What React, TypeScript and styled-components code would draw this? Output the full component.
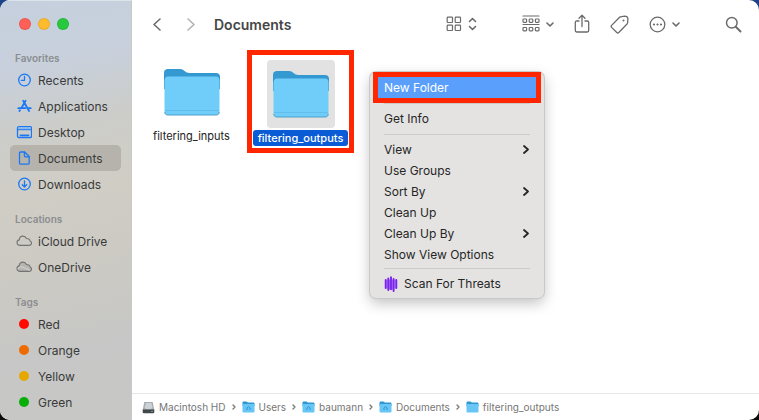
import React from "react";
import styled, { createGlobalStyle } from "styled-components";

const GlobalStyle = createGlobalStyle`
  *, *::before, *::after { box-sizing: border-box; }
  body {
    margin: 0;
    background: linear-gradient(180deg, #1f4387 0%, #23375c 45%, #0b0b0a 90%);
    font-family: Inter, "Liberation Sans", sans-serif;
    color: #1f1f1f;
  }
  button { font: inherit; color: inherit; background: none; border: 0; padding: 0; }
  ul, ol { list-style: none; margin: 0; padding: 0; }
  svg { display: block; flex: none; }
`;

const FinderWindow = styled.div`
  position: relative;
  display: flex;
  min-height: 100vh;
  border-radius: 10px;
  overflow: hidden;
  background: #ffffff;
`;

const Sidebar = styled.nav`
  flex: none;
  width: 132px;
  padding: 0 10px 4px;
  border-top: 1px solid #dde3ea;
  border-right: 1px solid #c9c9c5;
  background: linear-gradient(168deg, #c5d0de 0%, #c8d0dc 16%, #cccdca 30%, #d0cdc5 46%, #cbc9c3 66%, #c6c7c6 82%, #c7c7c5 100%);
`;

const WindowControls = styled.div`
  display: flex;
  gap: 7px;
  height: 49px;
  padding: 17px 0 0 9px;
`;

const Light = styled.button<{ $color: string }>`
  width: 12px;
  height: 12px;
  border-radius: 50%;
  background: ${(p) => p.$color};
  box-shadow: inset 0 0 0 1px rgba(0, 0, 0, 0.08);
`;

const Section = styled.section`
  & + & { margin-top: 14px; }
`;

const SectionTitle = styled.h2`
  margin: 0;
  padding-left: 5px;
  font-size: 10px;
  line-height: 17px;
  font-weight: 600;
  color: #8b8e90;
`;

const SideItem = styled.button<{ $active?: boolean }>`
  display: flex;
  align-items: center;
  gap: 6px;
  width: 100%;
  height: 26px;
  padding-left: 6px;
  border-radius: 5px;
  font-size: 12px;
  text-align: left;
  color: #3a3a3a;
  background: ${(p) => (p.$active ? "#b5b3ac" : "transparent")};
`;

const TagDot = styled.span<{ $color: string }>`
  width: 10px;
  height: 10px;
  margin: 0 3px;
  border-radius: 50%;
  background: ${(p) => p.$color};
`;

const Main = styled.main`
  flex: 1;
  min-width: 0;
  display: flex;
  flex-direction: column;
`;

const Toolbar = styled.header`
  display: flex;
  align-items: center;
  justify-content: space-between;
  height: 48px;
  padding: 0 17px 0 21px;
  color: #6b6b6b;
`;

const ToolGroup = styled.div<{ $gap: number }>`
  display: flex;
  align-items: center;
  gap: ${(p) => p.$gap}px;
`;

const ToolButton = styled.button`
  display: flex;
  align-items: center;
  gap: 6px;
  &:disabled { color: #b3b3b3; }
`;

const Title = styled.h1`
  margin: 0;
  font-size: 14px;
  font-weight: 600;
  color: #454545;
`;

const Files = styled.div`
  flex: 1;
  display: flex;
  align-items: flex-start;
  gap: 2px;
  padding: 2px 6px 0;
`;

const FileItem = styled.button<{ $selected?: boolean }>`
  position: relative;
  display: flex;
  flex-direction: column;
  align-items: center;
  gap: 2px;
  width: 107px;
  padding-top: ${(p) => (p.$selected ? 10 : 8)}px;
`;

const FileTile = styled.span<{ $selected?: boolean }>`
  display: grid;
  place-items: center;
  width: 68px;
  height: 68px;
  border-radius: 4px;
  background: ${(p) => (p.$selected ? "#e2e2e2" : "transparent")};
`;

const FileName = styled.span<{ $selected?: boolean }>`
  padding: 0 5px;
  border-radius: 3px;
  font-size: 11px;
  line-height: 16px;
  font-weight: ${(p) => (p.$selected ? 500 : 400)};
  color: ${(p) => (p.$selected ? "#ffffff" : "#222222")};
  background: ${(p) => (p.$selected ? "#0a5bd6" : "transparent")};
`;

const Callout = styled.span`
  position: absolute;
  inset: 0 0 -7px 0;
  border: 5px solid #ff2600;
  pointer-events: none;
`;

const PathBar = styled.footer`
  height: 27px;
  border-top: 1px solid #e6e6e6;
`;

const PathList = styled.ol`
  display: flex;
  align-items: center;
  height: 26px;
  padding-left: 10px;
  gap: 6px;
`;

const PathItem = styled.li`
  display: flex;
  align-items: center;
  gap: 6px;
  color: #767676;
`;

const PathButton = styled.button`
  display: flex;
  align-items: center;
  gap: 4px;
  font-size: 10px;
  white-space: nowrap;
`;

const Menu = styled.div`
  position: absolute;
  left: 370px;
  top: 72px;
  width: 174px;
  padding: 5px 0 4px;
  border-radius: 6px;
  background: #e4e3e2;
  box-shadow: 0 0 0 1px #c9c9c9, 0 5px 14px rgba(0, 0, 0, 0.25);
`;

const MenuItem = styled.button<{ $highlight?: boolean }>`
  position: relative;
  display: flex;
  align-items: center;
  gap: 6px;
  width: calc(100% - 10px);
  height: 21px;
  margin: 0 5px;
  padding: 0 10px 0 9px;
  font-size: 12px;
  text-align: left;
  color: ${(p) => (p.$highlight ? "#ffffff" : "#262626")};
  background: ${(p) => (p.$highlight ? "#5a9ffb" : "transparent")};
`;

const MenuLabel = styled.span`
  flex: 1;
`;

const MenuCallout = styled(Callout)`
  inset: -5px -2px;
`;

const Separator = styled.hr`
  height: 1px;
  margin: 5px 14px 4px;
  border: 0;
  background: #cccbca;
  &:last-of-type { margin-top: 3px; }
`;

const stroke = { fill: "none", stroke: "currentColor", strokeLinecap: "round", strokeLinejoin: "round" } as const;

type ChevronProps = { dir: "left" | "right" | "down"; w: number; h: number; weight?: number };

const Chevron = ({ dir, w, h, weight = 1.6 }: ChevronProps) => {
  const points = {
    left: `${w - 1},1 1,${h / 2} ${w - 1},${h - 1}`,
    right: `1,1 ${w - 1},${h / 2} 1,${h - 1}`,
    down: `1,1 ${w / 2},${h - 1} ${w - 1},1`,
  }[dir];
  return (
    <svg width={w} height={h} {...stroke} strokeWidth={weight} aria-hidden="true">
      <polyline points={points} />
    </svg>
  );
};

const cloud = "M4.4 12.4C2.3 12.4 1 11.2 1 9.6c0-1.4 1-2.5 2.3-2.7C3.2 4.7 4.8 3.1 6.9 3.1c1.6 0 2.9.9 3.5 2.4 2 0 3.5 1 3.6 2.5 1 .3 1.5 1.1 1.5 2 0 1.500-1.100 2.400-2.700 2.400Z";

const SideIcon = ({ name }: { name: string }) => {
  const isCloud = name === "cloud" || name === "onedrive";
  return (
    <svg width="16" height="16" viewBox="0 0 16 16" {...stroke} stroke={isCloud ? "#737373" : "#1a78f5"} strokeWidth={isCloud ? 1.1 : 1.3} aria-hidden="true">
      {name === "recents" && <><circle cx="8.5" cy="8" r="5.8" /><path d="M8.5 4.3v4H5.3" /></>}
      {name === "apps" && (
        <path strokeWidth="1.8" d="M7.2 2.8l5.900 10.200M9.600 2.800 5.300 10.200M3.900 12.300l-.5.800M2.300 10.200h7M12.600 10.200h2.100" />
      )}
      {name === "desktop" && (
        <>
          <rect x="1.5" y="2.7" width="14" height="10.8" rx="1.3" />
          <path fill="#8ab9ed" stroke="none" d="M2.200 3.300h12.600v2.200H2.200z" />
          <path d="M1.800 5.700h13.400" strokeWidth="1" />
          <path d="M4.500 11.300h8" strokeWidth="1.8" />
        </>
      )}
      {name === "documents" && (
        <>
          <path d="M4.600 2h4l4.600 4.500V13c0 .7-.4 1.100-1.100 1.100H4.600c-.7 0-1.100-.4-1.100-1.100V3.100C3.500 2.400 3.900 2 4.600 2Z" />
          <path d="M8.400 2.200v3.500c0 .7.4 1.100 1 1.100h3.600" />
        </>
      )}
      {name === "downloads" && <><circle cx="8.5" cy="8" r="5.8" /><path d="M8.500 4.900v6M6.300 8.800l2.200 2.200 2.200-2.200" /></>}
      {name === "cloud" && <path d={cloud} />}
      {name === "onedrive" && <><path d={cloud} fill="#b5b5b2" /><path d="M2 9.500c1.800-2 4-2 6.200-.8L13.500 11" stroke="#cfcfcb" /></>}
    </svg>
  );
};

const Folder = () => (
  <svg width="56" height="48" viewBox="0 0 56 48" aria-hidden="true">
    <path d="M0 5c0-3 1.500-4 4-4h12c2 0 3.300.8 4.600 2s2.800 2 5 2H52c2.700 0 4 1.300 4 4v12H0Z" fill="#3599d1" />
    <path d="M0 9.500h55.500v3H0Z" fill="#178bc9" />
    <path d="M.5 12c0-2.300 1.200-3.500 3.500-3.500h48c2.300 0 3.500 1.200 3.500 3.500v31.500c0 2.500-1.200 3.500-3.500 3.500H4c-2.300 0-3.500-1-3.500-3.500Z" fill="#70cdfa" />
    <path d="M1 42.500h54" stroke="#62bdea" />
    <path d="M.8 44c.2 2.200 1.300 3 3.200 3h48c2 0 3-.8 3.200-3" fill="none" stroke="#4c9fcb" />
  </svg>
);

const SmallFolder = ({ mark }: { mark?: boolean }) => (
  <svg width="13" height="12" viewBox="0 0 13 12" aria-hidden="true">
    <path d="M.5 1.500Q.5.500 1.500.500h3l1.300 1h5.700q1 0 1 1V5H.5Z" fill="#2e96d1" />
    <path d="M.5 3.800q0-.8.8-.8h10.400q.8 0 .8.8v6.700q0 1-1 1h-10q-1 0-1-1Z" fill="#67c6f6" />
    {mark && <path d="M5 9V6.900L6.500 5.500 8 6.900V9" fill="none" stroke="#2f95cf" />}
  </svg>
);

const Disk = () => (
  <svg width="13" height="13" viewBox="0 0 13 13" aria-hidden="true">
    <path d="M2.300 1h8.400l1.600 8H.7Z" fill="#a6adb1" />
    <path d="M4 2h5.500l1 5c-2 1.600-6 1.600-8 0Z" fill="#ccd2d6" />
    <path d="M.7 8.500h11.600V11q0 1.300-1.300 1.300H2Q.7 12.300.7 11Z" fill="#414649" />
    <path d="M9.500 10.500h1" stroke="#a8e0c0" />
  </svg>
);

const ThreatIcon = () => (
  <svg width="14" height="16" viewBox="0 0 14 16" fill="none" stroke="#7a22f0" strokeWidth="1.9" strokeLinecap="round" aria-hidden="true">
    <path d="M3 4v8M5.500 4v9M8.300 4v9M11 4v8" strokeWidth="1.2" stroke="#a873f2" />
    <path d="M1.700 4v8M4.300 2.500v11.500M7 1.300v12M9.600 3v12M12.300 4v8" />
  </svg>
);

const GridIcon = () => (
  <svg width="16" height="16" {...stroke} strokeWidth="1.2" aria-hidden="true">
    {[[1, 1], [9, 1], [1, 9], [9, 9]].map(([x, y]) => <rect key={`${x}-${y}`} x={x + 0.2} y={y + 0.2} width="5.3" height="5.3" rx=".7" />)}
  </svg>
);

const UpDownIcon = () => (
  <svg width="9" height="14" {...stroke} strokeWidth="1.6" aria-hidden="true"><path d="M1.500 4.500l3-3 3 3M1.500 9.500l3 3 3-3" /></svg>
);

const GroupIcon = () => (
  <svg width="18" height="18" {...stroke} strokeWidth="1.2" aria-hidden="true">
    <path d="M1 1h16M1 9.500h16" />
    {[4, 12.5].map((y) => [1, 7.2, 13.4].map((x) => <rect key={`${x}-${y}`} x={x} y={y} width="3.6" height="3.3" rx=".8" />))}
  </svg>
);

const ShareIcon = () => (
  <svg width="16" height="20" {...stroke} strokeWidth="1.3" aria-hidden="true">
    <path d="M5 7H2.700Q1.300 7 1.300 8.400v8.200Q1.300 18 2.700 18h10.600q1.400 0 1.400-1.400V8.400Q14.700 7 13.300 7H11M8 12.500V1.500M5 4.300l3-3 3 3" />
  </svg>
);

const TagIcon = () => (
  <svg width="19" height="19" {...stroke} strokeWidth="1.3" aria-hidden="true">
    <path d="M10.600 1.900l4-.7q3 0 3.300 2.500l-.3 4q-.1.900-.8 1.600l-8 8.200q-1 1-2 0L1.600 12.400q-1-1 0-2l7.500-7.700q.6-.6 1.500-.8Z" />
    <circle cx="13.5" cy="5.500" r="1" fill="currentColor" stroke="none" />
  </svg>
);

const MoreIcon = () => (
  <svg width="17" height="17" {...stroke} strokeWidth="1.3" aria-hidden="true">
    <circle cx="8.5" cy="8.5" r="7.3" />
    <g fill="currentColor" stroke="none"><circle cx="5" cy="8.5" r="1.1" /><circle cx="8.5" cy="8.5" r="1.1" /><circle cx="12" cy="8.5" r="1.1" /></g>
  </svg>
);

const SearchIcon = () => (
  <svg width="17" height="17" {...stroke} strokeWidth="1.5" aria-hidden="true"><circle cx="6.8" cy="6.8" r="5.3" /><path d="M11 11l4.500 4.500" strokeWidth="2" /></svg>
);

const favorites = [["Recents", "recents"], ["Applications", "apps"], ["Desktop", "desktop"], ["Documents", "documents"], ["Downloads", "downloads"]];
const locations = [["iCloud Drive", "cloud"], ["OneDrive", "onedrive"]];
const tags = [["Red", "#ff0a00"], ["Orange", "#ee6b00"], ["Yellow", "#e6a700"], ["Green", "#08ad08"]];
const viewItems = [["View", true], ["Use Groups", false], ["Sort By", true], ["Clean Up", false], ["Clean Up By", true], ["Show View Options", false]] as const;
const path = ["Macintosh HD", "Users", "baumann", "Documents", "filtering_outputs"];

export default function App() {
  return (
    <>
      <GlobalStyle />
      <FinderWindow>
        <Sidebar aria-label="Sidebar">
          <WindowControls>
            <Light $color="#ff5f57" aria-label="Close" />
            <Light $color="#febb2e" aria-label="Minimize" />
            <Light $color="#28c83f" aria-label="Zoom" />
          </WindowControls>
          <Section>
            <SectionTitle>Favorites</SectionTitle>
            {favorites.map(([label, icon]) => (
              <SideItem key={label} $active={label === "Documents"}><SideIcon name={icon} />{label}</SideItem>
            ))}
          </Section>
          <Section>
            <SectionTitle>Locations</SectionTitle>
            {locations.map(([label, icon]) => <SideItem key={label}><SideIcon name={icon} />{label}</SideItem>)}
          </Section>
          <Section>
            <SectionTitle>Tags</SectionTitle>
            {tags.map(([label, color]) => <SideItem key={label}><TagDot $color={color} />{label}</SideItem>)}
          </Section>
        </Sidebar>

        <Main>
          <Toolbar>
            <ToolGroup $gap={19}>
              <ToolGroup $gap={26}>
                <ToolButton aria-label="Back"><Chevron dir="left" w={8} h={13} /></ToolButton>
                <ToolButton aria-label="Forward" disabled><Chevron dir="right" w={8} h={13} /></ToolButton>
              </ToolGroup>
              <Title>Documents</Title>
            </ToolGroup>
            <ToolGroup $gap={45}>
              <ToolButton aria-label="View as icons"><GridIcon /><UpDownIcon /></ToolButton>
              <ToolGroup $gap={20}>
                <ToolButton aria-label="Group items"><GroupIcon /><Chevron dir="down" w={8} h={5} /></ToolButton>
                <ToolButton aria-label="Share"><ShareIcon /></ToolButton>
                <ToolButton aria-label="Edit tags"><TagIcon /></ToolButton>
                <ToolButton aria-label="More actions"><MoreIcon /><Chevron dir="down" w={8} h={5} /></ToolButton>
              </ToolGroup>
              <ToolButton aria-label="Search"><SearchIcon /></ToolButton>
            </ToolGroup>
          </Toolbar>

          <Files>
            <FileItem>
              <FileTile><Folder /></FileTile>
              <FileName>filtering_inputs</FileName>
            </FileItem>
            <FileItem $selected>
              <FileTile $selected><Folder /></FileTile>
              <FileName $selected>filtering_outputs</FileName>
              <Callout />
            </FileItem>
          </Files>

          <PathBar>
            <PathList>
              {path.map((label, i) => (
                <PathItem key={label}>
                  <PathButton>{i === 0 ? <Disk /> : <SmallFolder mark={i < 4} />}{label}</PathButton>
                  {i < path.length - 1 && <Chevron dir="right" w={4} h={6} weight={1.3} />}
                </PathItem>
              ))}
            </PathList>
          </PathBar>
        </Main>

        <Menu role="menu">
          <MenuItem role="menuitem" $highlight><MenuLabel>New Folder</MenuLabel><MenuCallout /></MenuItem>
          <Separator />
          <MenuItem role="menuitem"><MenuLabel>Get Info</MenuLabel></MenuItem>
          <Separator />
          {viewItems.map(([label, sub]) => (
            <MenuItem key={label} role="menuitem">
              <MenuLabel>{label}</MenuLabel>
              {sub && <Chevron dir="right" w={6} h={9} weight={1.8} />}
            </MenuItem>
          ))}
          <Separator />
          <MenuItem role="menuitem"><ThreatIcon /><MenuLabel>Scan For Threats</MenuLabel></MenuItem>
        </Menu>
      </FinderWindow>
    </>
  );
}
